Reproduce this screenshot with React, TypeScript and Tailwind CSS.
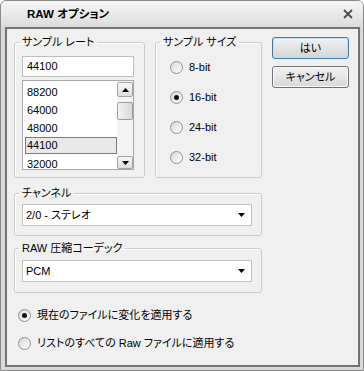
import React from "react";

const rates = ["88200", "64000", "48000", "44100", "32000"];

export default function App() {
  return (
    <div className="w-[364px] h-[371px] bg-white font-['Liberation_Sans','Noto_Sans_CJK_JP',sans-serif] text-[11px] text-black [font-feature-settings:'palt']">
      <div className="w-[364px] h-[371px] rounded-t-[6px] border border-[#8a8a8a] bg-[#d9d9d9] flex flex-col">
        {/* Title bar */}
        <div className="h-[26px] shrink-0 flex items-center pl-[26px] pr-[10px] rounded-t-[5px] bg-linear-to-b from-[#f6f6f6] to-[#dcdcdc]">
          <span className="flex-1 font-bold text-[11.5px] leading-[16px]">RAW オプション</span>
          <svg width="10" height="10" viewBox="0 0 10 10">
            <path d="M1 1 L9 9 M9 1 L1 9" stroke="#4d4d4d" strokeWidth="1.8" />
          </svg>
        </div>

        {/* Client area */}
        <div className="ml-[4px] mr-[3px] mb-[3px] flex-1 border-2 border-[#737373] bg-[#f0f0f0] pl-[7px] pt-[5px]">
          <div className="flex gap-[10px]">
            <Group label="サンプル レート" className="w-[131px] h-[144px]">
              <div className="mt-[6px] h-[21px] w-[112px] border border-[#bdbdbd] bg-white pl-[4px] leading-[19px]">44100</div>
              <div className="mt-[3px] h-[90px] w-[112px] border border-[#a9a9a9] bg-white flex">
                <div className="flex-1 pt-[2px] overflow-hidden">
                  {rates.map((r) =>
                    r === "44100" ? (
                      <div key={r} className="ml-[2px] h-[17px] mb-[1px] border border-[#7b7b7b] bg-[#e9e9e9] pl-[1px] leading-[15px]">
                        {r}
                      </div>
                    ) : (
                      <div key={r} className="h-[18px] pl-[4px] leading-[18px]">
                        {r}
                      </div>
                    )
                  )}
                </div>
                <div className="w-[16px] flex flex-col pt-[1px] bg-[#f4f4f4]">
                  <ScrollBtn className="h-[15px]" up />
                  <div className="mt-[5px] h-[18px] border border-[#9c9c9c] rounded-[2px] bg-linear-to-r from-[#f3f3f3] to-[#d9d9d9]" />
                  <div className="flex-1" />
                  <ScrollBtn className="h-[13px]" />
                </div>
              </div>
            </Group>

            <Group label="サンプル サイズ" className="w-[107px] h-[144px]">
              <div className="mt-[2px] pl-[7px] flex flex-col">
                {["8-bit", "16-bit", "24-bit", "32-bit"].map((b) => (
                  <div key={b} className="h-[30px] flex items-center gap-[6px]">
                    <Radio checked={b === "16-bit"} />
                    <span>{b}</span>
                  </div>
                ))}
              </div>
            </Group>

            <div className="mt-[3px] flex flex-col gap-[7px]">
              <button className="h-[22px] w-[77px] rounded-[3px] border border-[#3d7bad] bg-linear-to-b from-[#f2f2f2] to-[#d5d5d5] shadow-[inset_0_0_0_1px_#c6e3f5] text-[11px] leading-[18px]">
                はい
              </button>
              <button className="h-[22px] w-[77px] rounded-[3px] border border-[#707070] bg-linear-to-b from-[#f2f2f2] to-[#d8d8d8] shadow-[inset_0_0_0_1px_#fbfbfb] text-[11px] leading-[18px]">
                キャンセル
              </button>
            </div>
          </div>

          <Group label="チャンネル" className="mt-[7px] w-[248px] h-[51px]">
            <Combo className="mt-[3px]" value="2/0 - ステレオ" />
          </Group>

          <Group label="RAW 圧縮コーデック" className="mt-[4px] w-[248px] h-[53px]">
            <Combo className="mt-[4px]" value="PCM" />
          </Group>

          <div className="mt-[12px] pl-[4px] flex flex-col gap-[8px]">
            <div className="h-[20px] flex items-center gap-[6px]">
              <Radio checked />
              <span>現在のファイルに変化を適用する</span>
            </div>
            <div className="h-[20px] flex items-center gap-[6px]">
              <Radio />
              <span>リストのすべての Raw ファイルに適用する</span>
            </div>
          </div>
        </div>
      </div>
    </div>
  );
}

function Group({ label, className, children }: { label: string; className?: string; children?: React.ReactNode }) {
  return (
    <fieldset className={`border border-[#cdcdcd] rounded-[3px] px-[7px] shadow-[inset_1px_1px_0_#ffffff] ${className ?? ""}`}>
      <legend className="-ml-[3px] px-[3px] text-[11px] leading-[16px]">{label}</legend>
      {children}
    </fieldset>
  );
}

function Radio({ checked = false }: { checked?: boolean }) {
  return (
    <span className="w-[13px] h-[13px] shrink-0 rounded-full border border-[#8e8f8f] bg-linear-to-br from-[#d8d8d8] to-[#fdfdfd] flex items-center justify-center">
      {checked && <span className="w-[5px] h-[5px] rounded-full bg-[#111]" />}
    </span>
  );
}

function Arrow({ up = false }: { up?: boolean }) {
  return (
    <svg width="7" height="4" viewBox="0 0 7 4">
      <polygon points={up ? "0,4 7,4 3.5,0" : "0,0 7,0 3.5,4"} fill="#000" />
    </svg>
  );
}

function ScrollBtn({ className, up = false }: { className?: string; up?: boolean }) {
  return (
    <div className={`border border-[#a3a3a3] rounded-[2px] bg-linear-to-b from-[#f7f7f7] to-[#dedede] flex items-center justify-center ${className ?? ""}`}>
      <Arrow up={up} />
    </div>
  );
}

function Combo({ value, className }: { value: string; className?: string }) {
  return (
    <div className={`h-[22px] w-[230px] border border-[#c3c3c3] bg-white flex items-center pl-[3px] pr-[6px] ${className ?? ""}`}>
      <span className="flex-1">{value}</span>
      <Arrow />
    </div>
  );
}
